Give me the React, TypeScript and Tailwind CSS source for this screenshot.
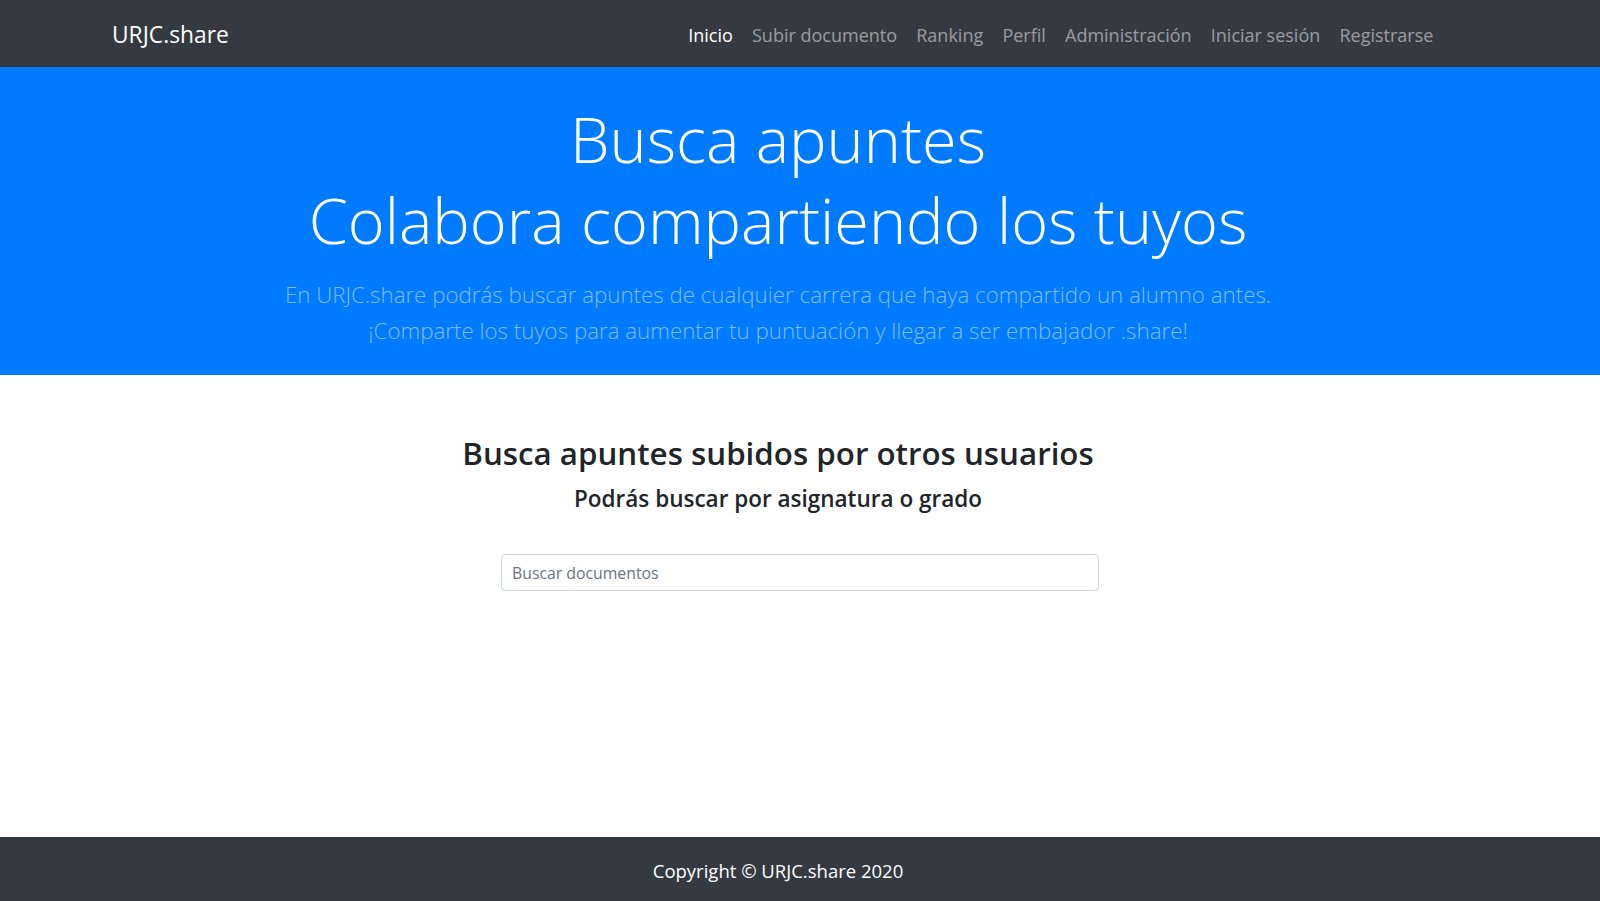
import React from "react";

const links = [
  { label: "Inicio", active: true },
  { label: "Subir documento" },
  { label: "Ranking" },
  { label: "Perfil" },
  { label: "Administración" },
  { label: "Iniciar sesión" },
  { label: "Registrarse" },
];

const Navbar = () => (
  <nav className="h-[67px] bg-[#343a40] flex items-center justify-between pl-[112px] pr-[157px] pt-[3px]">
    <a href="#" className="text-white text-[22.8px] leading-none">
      URJC.share
    </a>
    <ul className="flex items-center">
      {links.map((l) => (
        <li key={l.label}>
          <a
            href="#"
            className={
              l.active
                ? "block px-[9.6px] text-[18px] text-white"
                : "block px-[9.6px] text-[18px] text-white/50"
            }
          >
            {l.label}
          </a>
        </li>
      ))}
    </ul>
  </nav>
);

const Hero = () => (
  <section className="bg-[#007bff] h-[308px] pt-[32px] pr-[44px] text-center">
    <h1 className="text-white text-[63px] font-light leading-[80.6px]">
      Busca apuntes
      <br />
      Colabora compartiendo los tuyos
    </h1>
    <p className="mt-[17px] text-[#80bdff] text-[22.3px] font-light leading-[36px]">
      En URJC.share podrás buscar apuntes de cualquier carrera que haya compartido un alumno antes.
      <br />
      ¡Comparte los tuyos para aumentar tu puntuación y llegar a ser embajador .share!
    </p>
  </section>
);

const Search = () => (
  <main className="flex-1 pt-[58px]">
    <div className="pr-[44px] text-center text-[#212529]">
      <h3 className="text-[31.3px] font-semibold leading-[40px]">Busca apuntes subidos por otros usuarios</h3>
      <h5 className="mt-[11px] text-[22.5px] font-semibold leading-[29px]">Podrás buscar por asignatura o grado</h5>
    </div>
    <div className="mt-[41px] flex justify-center">
      <input
        type="text"
        placeholder="Buscar documentos"
        className="w-[598px] h-[37px] px-[10px] border border-[#ced4da] rounded-[4px] text-[15.8px] text-[#495057] placeholder:text-[#6c757d] outline-none"
      />
    </div>
  </main>
);

const Footer = () => (
  <footer className="h-[64px] bg-[#343a40] flex items-center justify-center pr-[44px] pt-[3px]">
    <p className="text-white text-[18.5px]">Copyright © URJC.share 2020</p>
  </footer>
);

export default function App() {
  return (
    <div className="min-h-screen flex flex-col bg-white font-['Open_Sans',sans-serif]">
      <Navbar />
      <Hero />
      <Search />
      <Footer />
    </div>
  );
}
